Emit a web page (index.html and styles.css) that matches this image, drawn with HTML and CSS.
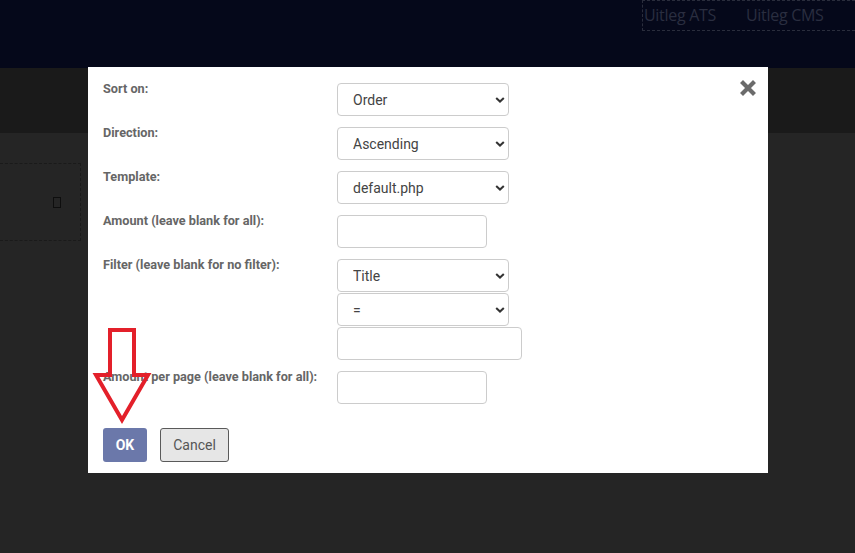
FILE: index.html
```html
<!DOCTYPE html>
<html lang="nl">
<head>
<meta charset="utf-8">
<title>Sort settings</title>
<link rel="stylesheet" href="styles.css">
</head>
<body>
<header class="topbar">
  <nav class="topnav">
    <a class="navlink" href="#">Uitleg ATS</a>
    <a class="navlink" href="#">Uitleg CMS</a>
  </nav>
</header>
<div class="band"></div>
<main class="content">
  <div class="tile"><span class="tofu"></span></div>
</main>

<div class="modal">
  <svg class="close" viewBox="0 0 18 18" width="18" height="18" aria-label="Close">
    <path d="M4 4 L14 14 M14 4 L4 14" stroke="#6b6b6b" stroke-width="4.2" stroke-linecap="square" fill="none"/>
  </svg>
  <form class="form">
    <label class="lbl">Sort on:</label>
    <div class="ctrls">
      <div class="sel"><select><option>Order</option></select><svg class="chev" viewBox="0 0 10 6" width="10" height="6"><path d="M1.2 1 L5 4.6 L8.8 1" stroke="#333" stroke-width="2" fill="none"/></svg></div>
    </div>

    <label class="lbl">Direction:</label>
    <div class="ctrls">
      <div class="sel"><select><option>Ascending</option></select><svg class="chev" viewBox="0 0 10 6" width="10" height="6"><path d="M1.2 1 L5 4.6 L8.8 1" stroke="#333" stroke-width="2" fill="none"/></svg></div>
    </div>

    <label class="lbl">Template:</label>
    <div class="ctrls">
      <div class="sel"><select><option>default.php</option></select><svg class="chev" viewBox="0 0 10 6" width="10" height="6"><path d="M1.2 1 L5 4.6 L8.8 1" stroke="#333" stroke-width="2" fill="none"/></svg></div>
    </div>

    <label class="lbl">Amount (leave blank for all):</label>
    <div class="ctrls">
      <input class="txt short" type="text">
    </div>

    <label class="lbl">Filter (leave blank for no filter):</label>
    <div class="ctrls stack">
      <div class="sel"><select><option>Title</option></select><svg class="chev" viewBox="0 0 10 6" width="10" height="6"><path d="M1.2 1 L5 4.6 L8.8 1" stroke="#333" stroke-width="2" fill="none"/></svg></div>
      <div class="sel"><select><option>=</option></select><svg class="chev" viewBox="0 0 10 6" width="10" height="6"><path d="M1.2 1 L5 4.6 L8.8 1" stroke="#333" stroke-width="2" fill="none"/></svg></div>
      <input class="txt wide" type="text">
    </div>

    <label class="lbl">Amount per page (leave blank for all):</label>
    <div class="ctrls">
      <input class="txt short" type="text">
    </div>
  </form>
  <div class="actions">
    <button class="btn ok" type="button">OK</button>
    <button class="btn cancel" type="button">Cancel</button>
  </div>
</div>

<svg class="annot" width="855" height="553" viewBox="0 0 855 553">
  <polygon points="110,330 134,330 134,375 148,375 122,420 96,375 110,375" fill="none" stroke="#e3202a" stroke-width="4" stroke-linejoin="miter"/>
</svg>
</body>
</html>
```

FILE: styles.css
```css
* { box-sizing: border-box; }

html, body {
  margin: 0;
  padding: 0;
}

body {
  width: 855px;
  height: 553px;
  overflow: hidden;
  background: #252525;
  font-family: Roboto, "Liberation Sans", Arial, sans-serif;
  position: relative;
}

.topbar {
  height: 68px;
  background: #05081a;
  display: flex;
  justify-content: flex-end;
  align-items: flex-start;
}

.topnav {
  width: 213px;
  height: 31px;
  border: 1px dashed #2a2d3c;
  border-right: none;
  display: flex;
  align-items: center;
  gap: 30px;
  padding-left: 1px;
}

.navlink {
  font-family: "Open Sans", "Liberation Sans", sans-serif;
  font-size: 16px;
  letter-spacing: -0.3px;
  color: #2a2e40;
  text-decoration: none;
  line-height: 1;
  padding-bottom: 2px;
}

.band {
  height: 65px;
  background: #1a1a1a;
}

.content {
  padding-top: 30px;
}

.tile {
  width: 81px;
  height: 78px;
  border: 1px dashed #1a1a1a;
  border-left: none;
  display: flex;
  justify-content: flex-end;
  align-items: center;
  padding-right: 19px;
}

.tofu {
  width: 8px;
  height: 11px;
  border: 1px solid #0e0e0e;
}

.modal {
  position: absolute;
  left: 88px;
  top: 67px;
  width: 680px;
  height: 406px;
  background: #ffffff;
  padding: 16px 15px 12px 15px;
}

.close {
  position: absolute;
  top: 12px;
  right: 11px;
}

.form {
  display: grid;
  grid-template-columns: 234px 1fr;
  row-gap: 11px;
  align-items: start;
}

.lbl {
  font-size: 12.7px;
  font-weight: bold;
  color: #666666;
  line-height: 14px;
  margin-top: -1px;
}

.ctrls {
  display: flex;
  flex-direction: column;
  align-items: flex-start;
}

.stack {
  gap: 1px;
}

.sel {
  position: relative;
  width: 172px;
  height: 33px;
}

.sel select {
  -webkit-appearance: none;
  appearance: none;
  width: 100%;
  height: 100%;
  border: 1px solid #cccccc;
  border-radius: 4px;
  background: #ffffff;
  padding: 0 0 0 15px;
  font-family: Roboto, "Liberation Sans", Arial, sans-serif;
  font-size: 14px;
  color: #444444;
  margin: 0;
}

.chev {
  position: absolute;
  right: 4px;
  top: 14px;
  pointer-events: none;
}

.txt {
  height: 33px;
  border: 1px solid #cccccc;
  border-radius: 4px;
  background: #ffffff;
  margin: 0;
  padding: 0 8px;
  font-family: Roboto, "Liberation Sans", Arial, sans-serif;
  font-size: 14px;
}

.short { width: 150px; }
.wide { width: 185px; }

.actions {
  display: flex;
  gap: 13px;
  margin-top: 24px;
}

.btn {
  height: 34px;
  margin: 0;
  font-family: Roboto, "Liberation Sans", Arial, sans-serif;
  font-size: 14px;
  border-radius: 3px;
}

.ok {
  width: 44px;
  background: #6b78aa;
  color: #ffffff;
  font-weight: bold;
  border: none;
}

.cancel {
  width: 69px;
  background: #e6e6e6;
  color: #555555;
  border: 1px solid #5a5a5a;
}

.annot {
  position: absolute;
  left: 0;
  top: 0;
  pointer-events: none;
}
```
